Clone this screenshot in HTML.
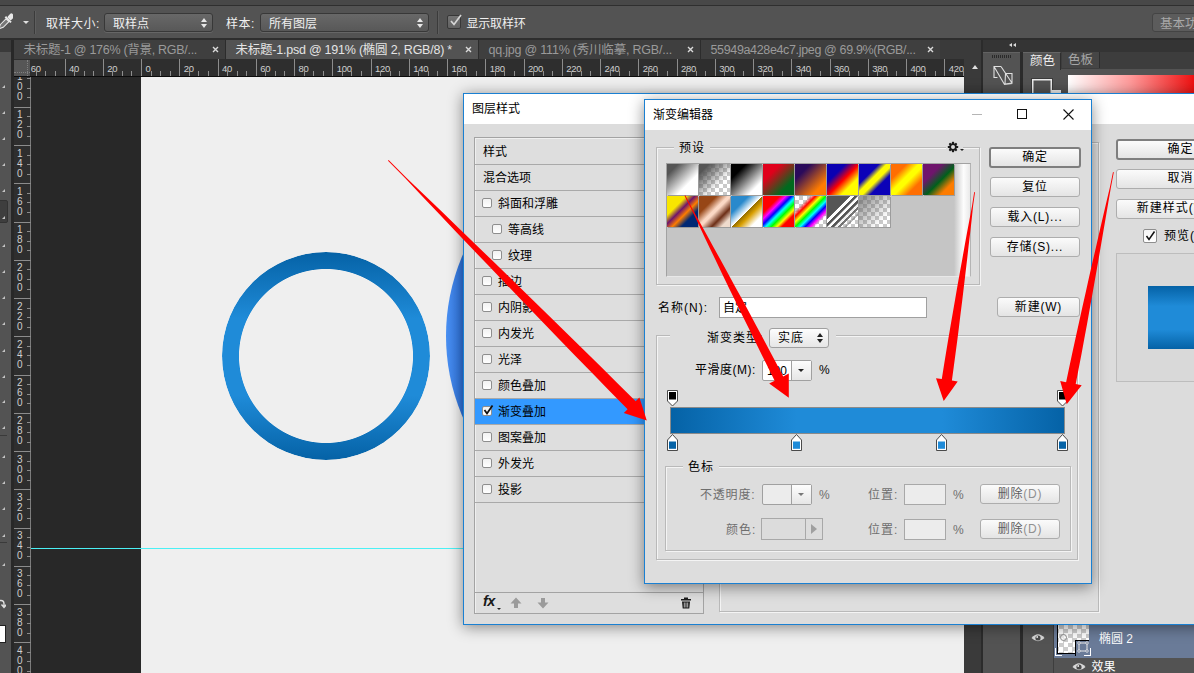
<!DOCTYPE html>
<html lang="zh-CN"><head><meta charset="utf-8"><title>Photoshop - 渐变编辑器</title>
<style>
html,body{margin:0;padding:0}
body{width:1194px;height:673px;overflow:hidden;position:relative;background:#535353;font-family:"Liberation Sans","Noto Sans CJK SC",sans-serif;font-size:12px;color:#000}
div,span,svg{position:absolute;box-sizing:border-box}
.t{white-space:nowrap;line-height:1}
.w{color:#f0f0f0}
.rt{color:#cfcfcf;font-size:9.5px;letter-spacing:-0.3px}
.btn{border:1px solid #adadad;border-radius:3px;background:linear-gradient(#fbfbfb,#e4e4e4);text-align:center;font-size:13px;white-space:nowrap}
.cb{width:10px;height:10px;border:1px solid #8e8e8e;border-radius:2px;background:linear-gradient(#f2f2f2,#fff)}
.row{left:0;width:228px;height:26px;border-bottom:1px solid #a9a9a9}
.row .t{font-size:13px;top:6px}
.grp{border:1px solid #b9b9b9;box-shadow:inset 1px 1px 0 #f4f4f4, 1px 1px 0 #f4f4f4}
.sw{width:31px;height:31px;top:0;box-shadow:1px 1px 0 #9c9c9c}
.dis{color:#6e6e6e}
.inp{border:1px solid #a8a8a8;background:#ececec}
</style></head><body>
<div style="left:0;top:0;width:1194px;height:5px;background:#484848"></div><div style="left:0;top:5px;width:1194px;height:1px;background:#2f2f2f"></div><div style="left:0;top:6px;width:1194px;height:33px;background:#535353"></div><div style="left:0;top:38px;width:1194px;height:2px;background:#2e2e2e"></div><svg style="left:-3.5px;top:12px" width="16" height="20" viewBox="0 0 16 20"><g transform="rotate(45 8 10)"><rect x="6" y="-1" width="5" height="6" rx="1.5" fill="#e8e8e8"/><rect x="4.5" y="5" width="8" height="2" fill="#e8e8e8"/><path d="M6.5 7 L10.5 7 L10.5 15 L8.5 19 L6.5 15 Z" fill="#777" stroke="#e8e8e8" stroke-width="1"/></g></svg><div style="left:22.5px;top:20.5px;width:0;height:0;border-left:3px solid transparent;border-right:3px solid transparent;border-top:3.5px solid #e0e0e0"></div><div style="left:34px;top:11px;width:1px;height:23px;background:#3b3b3b"></div><div style="left:35px;top:11px;width:1px;height:23px;background:#5e5e5e"></div><span class="t w" style="left:46px;top:17.5px;font-size:12px;letter-spacing:0.5px">取样大小:</span><div style="left:104px;top:13px;width:109px;height:19px;border:1px solid #383838;border-radius:3px;background:linear-gradient(#686868,#585858);box-shadow:0 1px 0 #666"><span class="t w" style="left:8px;top:3.5px;font-size:12px">取样点</span><div style="right:5px;top:4px;width:0;height:0;border-left:3px solid transparent;border-right:3px solid transparent;border-bottom:4px solid #e8e8e8"></div><div style="right:5px;top:10px;width:0;height:0;border-left:3px solid transparent;border-right:3px solid transparent;border-top:4px solid #e8e8e8"></div></div><span class="t w" style="left:226px;top:17.5px;font-size:12px;letter-spacing:0.5px">样本:</span><div style="left:260px;top:13px;width:169px;height:19px;border:1px solid #383838;border-radius:3px;background:linear-gradient(#686868,#585858);box-shadow:0 1px 0 #666"><span class="t w" style="left:8px;top:3.5px;font-size:12px">所有图层</span><div style="right:5px;top:4px;width:0;height:0;border-left:3px solid transparent;border-right:3px solid transparent;border-bottom:4px solid #e8e8e8"></div><div style="right:5px;top:10px;width:0;height:0;border-left:3px solid transparent;border-right:3px solid transparent;border-top:4px solid #e8e8e8"></div></div><div style="left:437px;top:11px;width:1px;height:23px;background:#3b3b3b"></div><div style="left:438px;top:11px;width:1px;height:23px;background:#5e5e5e"></div><div style="left:447px;top:15px;width:14px;height:14px;border:1px solid #383838;border-radius:2px;background:linear-gradient(#747474,#626262)"><svg style="left:1px;top:-2px" width="14" height="13" viewBox="0 0 14 13"><path d="M2 7 L5 10.5 L12 1" fill="none" stroke="#d6d6d6" stroke-width="1.7"/></svg></div><span class="t w" style="left:466.5px;top:17.5px;font-size:12px;letter-spacing:-0.2px">显示取样环</span><div style="left:1152px;top:13px;width:60px;height:19px;border:1px solid #444;border-radius:3px;background:#5c5c5c"><span class="t" style="left:7px;top:3.5px;font-size:12.5px;color:#a8a8a8">基本功能</span></div><div style="left:0;top:40px;width:11px;height:12px;background:#3a3a3a"></div><div style="left:11px;top:40px;width:3px;height:633px;background:#282828"></div><div style="left:14px;top:40px;width:967px;height:19px;background:#3e3e3e"></div><div style="left:14px;top:40px;width:212px;height:19px;background:#3f3f3f;border-right:1px solid #2c2c2c"><span class="t" style="left:9.5px;top:3.5px;font-size:12.5px;letter-spacing:-0.29px;color:#9a9a9a">未标题-1 @ 176% (背景, RGB/...</span><svg style="left:198px;top:6px" width="7" height="7" viewBox="0 0 7 7"><path d="M1 1 L6 6 M6 1 L1 6" stroke="#dadada" stroke-width="1.4"/></svg></div><div style="left:226px;top:40px;width:253px;height:19px;background:#535353;border-right:1px solid #2c2c2c"><span class="t" style="left:9.5px;top:3.5px;font-size:12.5px;letter-spacing:-0.23px;color:#e4e4e4">未标题-1.psd @ 191% (椭圆 2, RGB/8) *</span><svg style="left:239px;top:6px" width="7" height="7" viewBox="0 0 7 7"><path d="M1 1 L6 6 M6 1 L1 6" stroke="#dadada" stroke-width="1.4"/></svg></div><div style="left:479px;top:40px;width:222px;height:19px;background:#3f3f3f;border-right:1px solid #2c2c2c"><span class="t" style="left:9.5px;top:3.5px;font-size:12.5px;letter-spacing:-0.21px;color:#9a9a9a">qq.jpg @ 111% (秀川临摹, RGB/...</span><svg style="left:208px;top:6px" width="7" height="7" viewBox="0 0 7 7"><path d="M1 1 L6 6 M6 1 L1 6" stroke="#dadada" stroke-width="1.4"/></svg></div><div style="left:701px;top:40px;width:240px;height:19px;background:#3f3f3f;border-right:1px solid #2c2c2c"><span class="t" style="left:9.5px;top:3.5px;font-size:12.5px;letter-spacing:-0.35px;color:#9a9a9a">55949a428e4c7.jpeg @ 69.9%(RGB/...</span><svg style="left:226px;top:6px" width="7" height="7" viewBox="0 0 7 7"><path d="M1 1 L6 6 M6 1 L1 6" stroke="#dadada" stroke-width="1.4"/></svg></div><div style="left:14px;top:59px;width:950px;height:18px;background:#2e2e2e;border-bottom:1px solid #0c0c0c"></div><div style="left:14px;top:77px;width:17px;height:596px;background:#2e2e2e;border-right:1px solid #7c7c7c"></div><div style="left:14px;top:60px;width:16px;height:16px;background:#565656"></div><div style="left:14px;top:72px;width:16px;height:0;border-top:1px dotted #808080"></div><div style="left:27px;top:60px;width:0;height:16px;border-left:1px dotted #808080"></div><span class="t rt" style="left:30.8px;top:64px">60</span><div style="left:35.8px;top:71px;width:1px;height:5px;background:#8e8e8e"></div><div style="left:45.4px;top:71px;width:1px;height:5px;background:#8e8e8e"></div><div style="left:54.9px;top:71px;width:1px;height:5px;background:#8e8e8e"></div><div style="left:64.5px;top:59px;width:1px;height:17px;background:#8c8c8c"></div><span class="t rt" style="left:69.0px;top:64px">40</span><div style="left:74.1px;top:71px;width:1px;height:5px;background:#8e8e8e"></div><div style="left:83.6px;top:71px;width:1px;height:5px;background:#8e8e8e"></div><div style="left:93.2px;top:71px;width:1px;height:5px;background:#8e8e8e"></div><div style="left:102.8px;top:59px;width:1px;height:17px;background:#8c8c8c"></div><span class="t rt" style="left:107.2px;top:64px">20</span><div style="left:112.3px;top:71px;width:1px;height:5px;background:#8e8e8e"></div><div style="left:121.9px;top:71px;width:1px;height:5px;background:#8e8e8e"></div><div style="left:131.4px;top:71px;width:1px;height:5px;background:#8e8e8e"></div><div style="left:141.0px;top:59px;width:1px;height:17px;background:#8c8c8c"></div><span class="t rt" style="left:145.5px;top:64px">0</span><div style="left:150.6px;top:71px;width:1px;height:5px;background:#8e8e8e"></div><div style="left:160.1px;top:71px;width:1px;height:5px;background:#8e8e8e"></div><div style="left:169.7px;top:71px;width:1px;height:5px;background:#8e8e8e"></div><div style="left:179.2px;top:59px;width:1px;height:17px;background:#8c8c8c"></div><span class="t rt" style="left:183.8px;top:64px">20</span><div style="left:188.8px;top:71px;width:1px;height:5px;background:#8e8e8e"></div><div style="left:198.4px;top:71px;width:1px;height:5px;background:#8e8e8e"></div><div style="left:207.9px;top:71px;width:1px;height:5px;background:#8e8e8e"></div><div style="left:217.5px;top:59px;width:1px;height:17px;background:#8c8c8c"></div><span class="t rt" style="left:222.0px;top:64px">40</span><div style="left:227.1px;top:71px;width:1px;height:5px;background:#8e8e8e"></div><div style="left:236.6px;top:71px;width:1px;height:5px;background:#8e8e8e"></div><div style="left:246.2px;top:71px;width:1px;height:5px;background:#8e8e8e"></div><div style="left:255.8px;top:59px;width:1px;height:17px;background:#8c8c8c"></div><span class="t rt" style="left:260.2px;top:64px">60</span><div style="left:265.3px;top:71px;width:1px;height:5px;background:#8e8e8e"></div><div style="left:274.9px;top:71px;width:1px;height:5px;background:#8e8e8e"></div><div style="left:284.4px;top:71px;width:1px;height:5px;background:#8e8e8e"></div><div style="left:294.0px;top:59px;width:1px;height:17px;background:#8c8c8c"></div><span class="t rt" style="left:298.5px;top:64px">80</span><div style="left:303.6px;top:71px;width:1px;height:5px;background:#8e8e8e"></div><div style="left:313.1px;top:71px;width:1px;height:5px;background:#8e8e8e"></div><div style="left:322.7px;top:71px;width:1px;height:5px;background:#8e8e8e"></div><div style="left:332.2px;top:59px;width:1px;height:17px;background:#8c8c8c"></div><span class="t rt" style="left:336.8px;top:64px">100</span><div style="left:341.8px;top:71px;width:1px;height:5px;background:#8e8e8e"></div><div style="left:351.4px;top:71px;width:1px;height:5px;background:#8e8e8e"></div><div style="left:360.9px;top:71px;width:1px;height:5px;background:#8e8e8e"></div><div style="left:370.5px;top:59px;width:1px;height:17px;background:#8c8c8c"></div><span class="t rt" style="left:375.0px;top:64px">120</span><div style="left:380.1px;top:71px;width:1px;height:5px;background:#8e8e8e"></div><div style="left:389.6px;top:71px;width:1px;height:5px;background:#8e8e8e"></div><div style="left:399.2px;top:71px;width:1px;height:5px;background:#8e8e8e"></div><div style="left:408.8px;top:59px;width:1px;height:17px;background:#8c8c8c"></div><span class="t rt" style="left:413.2px;top:64px">140</span><div style="left:418.3px;top:71px;width:1px;height:5px;background:#8e8e8e"></div><div style="left:427.9px;top:71px;width:1px;height:5px;background:#8e8e8e"></div><div style="left:437.4px;top:71px;width:1px;height:5px;background:#8e8e8e"></div><div style="left:447.0px;top:59px;width:1px;height:17px;background:#8c8c8c"></div><span class="t rt" style="left:451.5px;top:64px">160</span><div style="left:456.6px;top:71px;width:1px;height:5px;background:#8e8e8e"></div><div style="left:466.1px;top:71px;width:1px;height:5px;background:#8e8e8e"></div><div style="left:475.7px;top:71px;width:1px;height:5px;background:#8e8e8e"></div><div style="left:485.2px;top:59px;width:1px;height:17px;background:#8c8c8c"></div><span class="t rt" style="left:489.8px;top:64px">180</span><div style="left:494.8px;top:71px;width:1px;height:5px;background:#8e8e8e"></div><div style="left:504.4px;top:71px;width:1px;height:5px;background:#8e8e8e"></div><div style="left:513.9px;top:71px;width:1px;height:5px;background:#8e8e8e"></div><div style="left:523.5px;top:59px;width:1px;height:17px;background:#8c8c8c"></div><span class="t rt" style="left:528.0px;top:64px">200</span><div style="left:533.1px;top:71px;width:1px;height:5px;background:#8e8e8e"></div><div style="left:542.6px;top:71px;width:1px;height:5px;background:#8e8e8e"></div><div style="left:552.2px;top:71px;width:1px;height:5px;background:#8e8e8e"></div><div style="left:561.8px;top:59px;width:1px;height:17px;background:#8c8c8c"></div><span class="t rt" style="left:566.2px;top:64px">220</span><div style="left:571.3px;top:71px;width:1px;height:5px;background:#8e8e8e"></div><div style="left:580.9px;top:71px;width:1px;height:5px;background:#8e8e8e"></div><div style="left:590.4px;top:71px;width:1px;height:5px;background:#8e8e8e"></div><div style="left:600.0px;top:59px;width:1px;height:17px;background:#8c8c8c"></div><span class="t rt" style="left:604.5px;top:64px">240</span><div style="left:609.6px;top:71px;width:1px;height:5px;background:#8e8e8e"></div><div style="left:619.1px;top:71px;width:1px;height:5px;background:#8e8e8e"></div><div style="left:628.7px;top:71px;width:1px;height:5px;background:#8e8e8e"></div><div style="left:638.2px;top:59px;width:1px;height:17px;background:#8c8c8c"></div><span class="t rt" style="left:642.8px;top:64px">260</span><div style="left:647.8px;top:71px;width:1px;height:5px;background:#8e8e8e"></div><div style="left:657.4px;top:71px;width:1px;height:5px;background:#8e8e8e"></div><div style="left:666.9px;top:71px;width:1px;height:5px;background:#8e8e8e"></div><div style="left:676.5px;top:59px;width:1px;height:17px;background:#8c8c8c"></div><span class="t rt" style="left:681.0px;top:64px">280</span><div style="left:686.1px;top:71px;width:1px;height:5px;background:#8e8e8e"></div><div style="left:695.6px;top:71px;width:1px;height:5px;background:#8e8e8e"></div><div style="left:705.2px;top:71px;width:1px;height:5px;background:#8e8e8e"></div><div style="left:714.8px;top:59px;width:1px;height:17px;background:#8c8c8c"></div><span class="t rt" style="left:719.2px;top:64px">300</span><div style="left:724.3px;top:71px;width:1px;height:5px;background:#8e8e8e"></div><div style="left:733.9px;top:71px;width:1px;height:5px;background:#8e8e8e"></div><div style="left:743.4px;top:71px;width:1px;height:5px;background:#8e8e8e"></div><div style="left:753.0px;top:59px;width:1px;height:17px;background:#8c8c8c"></div><span class="t rt" style="left:757.5px;top:64px">320</span><div style="left:762.6px;top:71px;width:1px;height:5px;background:#8e8e8e"></div><div style="left:772.1px;top:71px;width:1px;height:5px;background:#8e8e8e"></div><div style="left:781.7px;top:71px;width:1px;height:5px;background:#8e8e8e"></div><div style="left:791.2px;top:59px;width:1px;height:17px;background:#8c8c8c"></div><span class="t rt" style="left:795.8px;top:64px">340</span><div style="left:800.8px;top:71px;width:1px;height:5px;background:#8e8e8e"></div><div style="left:810.4px;top:71px;width:1px;height:5px;background:#8e8e8e"></div><div style="left:819.9px;top:71px;width:1px;height:5px;background:#8e8e8e"></div><div style="left:829.5px;top:59px;width:1px;height:17px;background:#8c8c8c"></div><span class="t rt" style="left:834.0px;top:64px">360</span><div style="left:839.1px;top:71px;width:1px;height:5px;background:#8e8e8e"></div><div style="left:848.6px;top:71px;width:1px;height:5px;background:#8e8e8e"></div><div style="left:858.2px;top:71px;width:1px;height:5px;background:#8e8e8e"></div><div style="left:867.8px;top:59px;width:1px;height:17px;background:#8c8c8c"></div><span class="t rt" style="left:872.2px;top:64px">380</span><div style="left:877.3px;top:71px;width:1px;height:5px;background:#8e8e8e"></div><div style="left:886.9px;top:71px;width:1px;height:5px;background:#8e8e8e"></div><div style="left:896.4px;top:71px;width:1px;height:5px;background:#8e8e8e"></div><div style="left:906.0px;top:59px;width:1px;height:17px;background:#8c8c8c"></div><span class="t rt" style="left:910.5px;top:64px">400</span><div style="left:915.6px;top:71px;width:1px;height:5px;background:#8e8e8e"></div><div style="left:925.1px;top:71px;width:1px;height:5px;background:#8e8e8e"></div><div style="left:934.7px;top:71px;width:1px;height:5px;background:#8e8e8e"></div><div style="left:944.2px;top:59px;width:1px;height:17px;background:#8c8c8c"></div><span class="t rt" style="left:948.8px;top:64px">420</span><div style="left:953.8px;top:71px;width:1px;height:5px;background:#8e8e8e"></div><div style="left:963.4px;top:71px;width:1px;height:5px;background:#8e8e8e"></div><div style="left:0;top:77px;width:40px;height:596px;overflow:hidden"><div style="left:0;top:-77px;width:40px;height:673px"><span class="t rt" style="left:17px;top:72.0px;font-size:10px">1</span><span class="t rt" style="left:17px;top:82.0px;font-size:10px">0</span><span class="t rt" style="left:17px;top:92.0px;font-size:10px">0</span><div style="left:27px;top:78.1px;width:4px;height:1px;background:#8a8a8a"></div><div style="left:27px;top:87.7px;width:4px;height:1px;background:#8a8a8a"></div><div style="left:27px;top:97.2px;width:4px;height:1px;background:#8a8a8a"></div><div style="left:14px;top:106.8px;width:17px;height:1px;background:#8c8c8c"></div><span class="t rt" style="left:17px;top:110.3px;font-size:10px">1</span><span class="t rt" style="left:17px;top:120.3px;font-size:10px">2</span><span class="t rt" style="left:17px;top:130.3px;font-size:10px">0</span><div style="left:27px;top:116.4px;width:4px;height:1px;background:#8a8a8a"></div><div style="left:27px;top:125.9px;width:4px;height:1px;background:#8a8a8a"></div><div style="left:27px;top:135.5px;width:4px;height:1px;background:#8a8a8a"></div><div style="left:14px;top:145.1px;width:17px;height:1px;background:#8c8c8c"></div><span class="t rt" style="left:17px;top:148.6px;font-size:10px">1</span><span class="t rt" style="left:17px;top:158.6px;font-size:10px">4</span><span class="t rt" style="left:17px;top:168.6px;font-size:10px">0</span><div style="left:27px;top:154.6px;width:4px;height:1px;background:#8a8a8a"></div><div style="left:27px;top:164.2px;width:4px;height:1px;background:#8a8a8a"></div><div style="left:27px;top:173.7px;width:4px;height:1px;background:#8a8a8a"></div><div style="left:14px;top:183.3px;width:17px;height:1px;background:#8c8c8c"></div><span class="t rt" style="left:17px;top:186.8px;font-size:10px">1</span><span class="t rt" style="left:17px;top:196.8px;font-size:10px">6</span><span class="t rt" style="left:17px;top:206.8px;font-size:10px">0</span><div style="left:27px;top:192.9px;width:4px;height:1px;background:#8a8a8a"></div><div style="left:27px;top:202.4px;width:4px;height:1px;background:#8a8a8a"></div><div style="left:27px;top:212.0px;width:4px;height:1px;background:#8a8a8a"></div><div style="left:14px;top:221.6px;width:17px;height:1px;background:#8c8c8c"></div><span class="t rt" style="left:17px;top:225.1px;font-size:10px">1</span><span class="t rt" style="left:17px;top:235.1px;font-size:10px">8</span><span class="t rt" style="left:17px;top:245.1px;font-size:10px">0</span><div style="left:27px;top:231.1px;width:4px;height:1px;background:#8a8a8a"></div><div style="left:27px;top:240.7px;width:4px;height:1px;background:#8a8a8a"></div><div style="left:27px;top:250.2px;width:4px;height:1px;background:#8a8a8a"></div><div style="left:14px;top:259.8px;width:17px;height:1px;background:#8c8c8c"></div><span class="t rt" style="left:17px;top:263.3px;font-size:10px">2</span><span class="t rt" style="left:17px;top:273.3px;font-size:10px">0</span><span class="t rt" style="left:17px;top:283.3px;font-size:10px">0</span><div style="left:27px;top:269.4px;width:4px;height:1px;background:#8a8a8a"></div><div style="left:27px;top:278.9px;width:4px;height:1px;background:#8a8a8a"></div><div style="left:27px;top:288.5px;width:4px;height:1px;background:#8a8a8a"></div><div style="left:14px;top:298.1px;width:17px;height:1px;background:#8c8c8c"></div><span class="t rt" style="left:17px;top:301.6px;font-size:10px">2</span><span class="t rt" style="left:17px;top:311.6px;font-size:10px">2</span><span class="t rt" style="left:17px;top:321.6px;font-size:10px">0</span><div style="left:27px;top:307.6px;width:4px;height:1px;background:#8a8a8a"></div><div style="left:27px;top:317.2px;width:4px;height:1px;background:#8a8a8a"></div><div style="left:27px;top:326.7px;width:4px;height:1px;background:#8a8a8a"></div><div style="left:14px;top:336.3px;width:17px;height:1px;background:#8c8c8c"></div><span class="t rt" style="left:17px;top:339.8px;font-size:10px">2</span><span class="t rt" style="left:17px;top:349.8px;font-size:10px">4</span><span class="t rt" style="left:17px;top:359.8px;font-size:10px">0</span><div style="left:27px;top:345.9px;width:4px;height:1px;background:#8a8a8a"></div><div style="left:27px;top:355.4px;width:4px;height:1px;background:#8a8a8a"></div><div style="left:27px;top:365.0px;width:4px;height:1px;background:#8a8a8a"></div><div style="left:14px;top:374.6px;width:17px;height:1px;background:#8c8c8c"></div><span class="t rt" style="left:17px;top:378.1px;font-size:10px">2</span><span class="t rt" style="left:17px;top:388.1px;font-size:10px">6</span><span class="t rt" style="left:17px;top:398.1px;font-size:10px">0</span><div style="left:27px;top:384.1px;width:4px;height:1px;background:#8a8a8a"></div><div style="left:27px;top:393.7px;width:4px;height:1px;background:#8a8a8a"></div><div style="left:27px;top:403.2px;width:4px;height:1px;background:#8a8a8a"></div><div style="left:14px;top:412.8px;width:17px;height:1px;background:#8c8c8c"></div><span class="t rt" style="left:17px;top:416.3px;font-size:10px">2</span><span class="t rt" style="left:17px;top:426.3px;font-size:10px">8</span><span class="t rt" style="left:17px;top:436.3px;font-size:10px">0</span><div style="left:27px;top:422.4px;width:4px;height:1px;background:#8a8a8a"></div><div style="left:27px;top:431.9px;width:4px;height:1px;background:#8a8a8a"></div><div style="left:27px;top:441.5px;width:4px;height:1px;background:#8a8a8a"></div><div style="left:14px;top:451.1px;width:17px;height:1px;background:#8c8c8c"></div><span class="t rt" style="left:17px;top:454.6px;font-size:10px">3</span><span class="t rt" style="left:17px;top:464.6px;font-size:10px">0</span><span class="t rt" style="left:17px;top:474.6px;font-size:10px">0</span><div style="left:27px;top:460.6px;width:4px;height:1px;background:#8a8a8a"></div><div style="left:27px;top:470.2px;width:4px;height:1px;background:#8a8a8a"></div><div style="left:27px;top:479.7px;width:4px;height:1px;background:#8a8a8a"></div><div style="left:14px;top:489.3px;width:17px;height:1px;background:#8c8c8c"></div><span class="t rt" style="left:17px;top:492.8px;font-size:10px">3</span><span class="t rt" style="left:17px;top:502.8px;font-size:10px">2</span><span class="t rt" style="left:17px;top:512.8px;font-size:10px">0</span><div style="left:27px;top:498.9px;width:4px;height:1px;background:#8a8a8a"></div><div style="left:27px;top:508.4px;width:4px;height:1px;background:#8a8a8a"></div><div style="left:27px;top:518.0px;width:4px;height:1px;background:#8a8a8a"></div><div style="left:14px;top:527.5px;width:17px;height:1px;background:#8c8c8c"></div><span class="t rt" style="left:17px;top:531.0px;font-size:10px">3</span><span class="t rt" style="left:17px;top:541.0px;font-size:10px">4</span><span class="t rt" style="left:17px;top:551.0px;font-size:10px">0</span><div style="left:27px;top:537.1px;width:4px;height:1px;background:#8a8a8a"></div><div style="left:27px;top:546.7px;width:4px;height:1px;background:#8a8a8a"></div><div style="left:27px;top:556.2px;width:4px;height:1px;background:#8a8a8a"></div><div style="left:14px;top:565.8px;width:17px;height:1px;background:#8c8c8c"></div><span class="t rt" style="left:17px;top:569.3px;font-size:10px">3</span><span class="t rt" style="left:17px;top:579.3px;font-size:10px">6</span><span class="t rt" style="left:17px;top:589.3px;font-size:10px">0</span><div style="left:27px;top:575.4px;width:4px;height:1px;background:#8a8a8a"></div><div style="left:27px;top:584.9px;width:4px;height:1px;background:#8a8a8a"></div><div style="left:27px;top:594.5px;width:4px;height:1px;background:#8a8a8a"></div><div style="left:14px;top:604.0px;width:17px;height:1px;background:#8c8c8c"></div><span class="t rt" style="left:17px;top:607.5px;font-size:10px">3</span><span class="t rt" style="left:17px;top:617.5px;font-size:10px">8</span><span class="t rt" style="left:17px;top:627.5px;font-size:10px">0</span><div style="left:27px;top:613.6px;width:4px;height:1px;background:#8a8a8a"></div><div style="left:27px;top:623.2px;width:4px;height:1px;background:#8a8a8a"></div><div style="left:27px;top:632.7px;width:4px;height:1px;background:#8a8a8a"></div><div style="left:14px;top:642.3px;width:17px;height:1px;background:#8c8c8c"></div><span class="t rt" style="left:17px;top:645.8px;font-size:10px">4</span><span class="t rt" style="left:17px;top:655.8px;font-size:10px">0</span><span class="t rt" style="left:17px;top:665.8px;font-size:10px">0</span><div style="left:27px;top:651.9px;width:4px;height:1px;background:#8a8a8a"></div><div style="left:27px;top:661.4px;width:4px;height:1px;background:#8a8a8a"></div><div style="left:27px;top:671.0px;width:4px;height:1px;background:#8a8a8a"></div></div></div><div style="left:972px;top:65px;width:0;height:0;border-left:3.5px solid transparent;border-right:3.5px solid transparent;border-bottom:4px solid #e0e0e0;z-index:3"></div><div style="left:31px;top:77px;width:110px;height:596px;background:#282828"></div><div style="left:141px;top:77px;width:823px;height:596px;background:#efefef"></div><div style="left:222px;top:252px;width:208px;height:208px;border-radius:50%;filter:blur(0.6px);background:linear-gradient(#0562a6,#1f8bd8 32%,#1f8bd8 69%,#0562a6);-webkit-mask:radial-gradient(circle closest-side,transparent 86.6px,#000 87.4px);mask:radial-gradient(circle closest-side,transparent 86.6px,#000 87.4px)"></div><div style="left:445.5px;top:130.5px;width:410px;height:410px;border-radius:50%;filter:blur(0.6px);background:linear-gradient(90deg,#4a90f2,#2e72dc 18px,#2a6cd6 30px)"></div><div style="left:31px;top:548px;width:440px;height:1px;background:#4bf0f5"></div><div style="left:0;top:52px;width:11px;height:621px;background:#535353"></div><div style="left:2px;top:85px;width:0;height:0;border-left:3px solid transparent;border-bottom:3px solid #c4c4c4"></div><div style="left:2px;top:111px;width:0;height:0;border-left:3px solid transparent;border-bottom:3px solid #c4c4c4"></div><div style="left:2px;top:137px;width:0;height:0;border-left:3px solid transparent;border-bottom:3px solid #c4c4c4"></div><div style="left:2px;top:163px;width:0;height:0;border-left:3px solid transparent;border-bottom:3px solid #c4c4c4"></div><div style="left:2px;top:189px;width:0;height:0;border-left:3px solid transparent;border-bottom:3px solid #c4c4c4"></div><div style="left:2px;top:215px;width:0;height:0;border-left:3px solid transparent;border-bottom:3px solid #c4c4c4"></div><div style="left:2px;top:244px;width:0;height:0;border-left:3px solid transparent;border-bottom:3px solid #c4c4c4"></div><div style="left:2px;top:270px;width:0;height:0;border-left:3px solid transparent;border-bottom:3px solid #c4c4c4"></div><div style="left:2px;top:296px;width:0;height:0;border-left:3px solid transparent;border-bottom:3px solid #c4c4c4"></div><div style="left:2px;top:322px;width:0;height:0;border-left:3px solid transparent;border-bottom:3px solid #c4c4c4"></div><div style="left:2px;top:349px;width:0;height:0;border-left:3px solid transparent;border-bottom:3px solid #c4c4c4"></div><div style="left:2px;top:375px;width:0;height:0;border-left:3px solid transparent;border-bottom:3px solid #c4c4c4"></div><div style="left:2px;top:400px;width:0;height:0;border-left:3px solid transparent;border-bottom:3px solid #c4c4c4"></div><div style="left:2px;top:426px;width:0;height:0;border-left:3px solid transparent;border-bottom:3px solid #c4c4c4"></div><div style="left:2px;top:455px;width:0;height:0;border-left:3px solid transparent;border-bottom:3px solid #c4c4c4"></div><div style="left:2px;top:481px;width:0;height:0;border-left:3px solid transparent;border-bottom:3px solid #c4c4c4"></div><div style="left:2px;top:507px;width:0;height:0;border-left:3px solid transparent;border-bottom:3px solid #c4c4c4"></div><div style="left:2px;top:534px;width:0;height:0;border-left:3px solid transparent;border-bottom:3px solid #c4c4c4"></div><div style="left:2px;top:563px;width:0;height:0;border-left:3px solid transparent;border-bottom:3px solid #c4c4c4"></div><div style="left:-4px;top:200px;width:12px;height:23px;border:1px solid #333;border-radius:2px;background:#3e3e3e"></div><div style="left:2px;top:216px;width:0;height:0;border-left:3px solid transparent;border-bottom:3px solid #c4c4c4"></div><div style="left:0;top:435px;width:7px;height:1px;background:#3a3a3a"></div><div style="left:0;top:542px;width:7px;height:1px;background:#3a3a3a"></div><svg style="left:-4px;top:597px" width="10" height="12" viewBox="0 0 10 12"><path d="M1 3.5 H5 Q8 3.5 8 7 V10 M5.5 7.5 L8 10.5 L10.5 7.5" fill="none" stroke="#e0e0e0" stroke-width="1.4"/></svg><div style="left:0;top:625px;width:6px;height:18px;background:#fff;border:1px solid #222;border-left:0"></div><div style="left:964px;top:40px;width:17px;height:633px;background:#3a3a3a"></div><div style="left:940px;top:40px;width:41px;height:19px;background:#3a3a3a"></div><div style="left:981px;top:40px;width:2px;height:633px;background:#2b2b2b"></div><div style="left:983px;top:40px;width:211px;height:12px;background:#343434"></div><div style="left:1009px;top:43px;width:0;height:0;border-top:2.5px solid transparent;border-bottom:2.5px solid transparent;border-right:3.5px solid #dcdcdc"></div><div style="left:1013px;top:43px;width:0;height:0;border-top:2.5px solid transparent;border-bottom:2.5px solid transparent;border-right:3.5px solid #dcdcdc"></div><div style="left:983px;top:52px;width:37px;height:621px;background:#535353;border-top:1px solid #626262"></div><div style="left:1020px;top:52px;width:3px;height:621px;background:#2b2b2b"></div><div style="left:992px;top:55px;width:19px;height:3px;background:repeating-linear-gradient(90deg,#2a2a2a 0 1px,transparent 1px 2px)"></div><svg style="left:992px;top:64px" width="22" height="24" viewBox="0 0 22 24"><path d="M9 2.5 L2 2.5 L2 13.5 L5.5 13.5 M13.5 9.5 L20 9.5 L20 19 L13 20 L13.5 9.5 M2 2.5 L12.5 20.5 L20.5 19.5 M9 2.5 L20 19" fill="none" stroke="#e0e0e0" stroke-width="1.1"/></svg><div style="left:1023px;top:52px;width:171px;height:17px;background:#3d3d3d"></div><div style="left:1023px;top:69px;width:171px;height:604px;background:#535353"></div><div style="left:1023px;top:52px;width:38px;height:18px;background:#535353;border-top:1px solid #666;border-right:1px solid #2e2e2e"><span class="t" style="left:7px;top:2px;font-size:12.5px;color:#ececec">颜色</span></div><div style="left:1062px;top:52px;width:38px;height:16px;background:#464646;border-right:1px solid #2e2e2e"><span class="t" style="left:6px;top:2px;font-size:12.5px;color:#a6a6a6">色板</span></div><div style="left:1031px;top:78px;width:22px;height:20px;border:1px solid #3c3c3c;background:#535353;box-shadow:inset 0 0 0 1.5px #ececec"></div><div style="left:1052px;top:90px;width:9px;height:9px;background:#f0f0f0"></div><div style="left:1068px;top:75px;width:126px;height:30px;background:linear-gradient(90deg,#fff,#f99 50%,#ee1111 100%)"></div><div style="left:1054px;top:625px;width:140px;height:33px;background:#6a7b98"></div><div style="left:1053px;top:625px;width:1px;height:48px;background:#3e3e3e"></div><div style="left:1057px;top:618px;width:32px;height:36px;border-left:1.5px solid #000;border-bottom:1.5px solid #000;background:#fff repeating-conic-gradient(#cdcdcd 0 25%,#fff 0 50%) 1px 2px/9px 9px"></div><div style="left:1075px;top:639.5px;width:14px;height:16px;background:#6a7b98;border-left:1.5px solid #000;border-top:1.5px solid #000"></div><svg style="left:1077px;top:641px" width="12" height="12" viewBox="0 0 12 12"><rect x="2" y="2" width="8" height="8" fill="none" stroke="#e6e6e6" stroke-width="1"/><g fill="#6a7b98" stroke="#e6e6e6" stroke-width="0.8"><circle cx="2" cy="2" r="1.3"/><circle cx="10" cy="2" r="1.3"/><circle cx="2" cy="10" r="1.3"/><circle cx="10" cy="10" r="1.3"/></g></svg><div style="left:1060px;top:634px;width:7px;height:7px;border:1px solid #8c8c8c;border-radius:50%;background:rgba(255,255,255,.6)"></div><div style="left:1055px;top:648px;width:7px;height:8px;border-left:1px solid #fff;border-bottom:1px solid #fff"></div><div style="left:1084px;top:648px;width:7px;height:8px;border-right:1px solid #fff;border-bottom:1px solid #fff"></div><span class="t" style="left:1099px;top:633px;font-size:12px;color:#fff">椭圆 2</span><span class="t" style="left:1091.5px;top:661px;font-size:12px;color:#fff">效果</span><svg style="left:1031px;top:633px" width="14" height="10" viewBox="0 0 14 10"><path d="M0.5 5 Q7 -2.5 13.5 5 Q7 11.5 0.5 5 Z" fill="#d8d8d8"/><circle cx="7" cy="5" r="2.6" fill="#4a4a4a"/><circle cx="6.2" cy="4" r="0.9" fill="#eee"/></svg><svg style="left:1072px;top:662px" width="14" height="10" viewBox="0 0 14 10"><path d="M0.5 5 Q7 -2.5 13.5 5 Q7 11.5 0.5 5 Z" fill="#d8d8d8"/><circle cx="7" cy="5" r="2.6" fill="#4a4a4a"/><circle cx="6.2" cy="4" r="0.9" fill="#eee"/></svg><div style="left:463px;top:93px;width:800px;height:532px;background:#dcdcdc;border:1px solid #1a80d2;box-shadow:0 2px 14px rgba(0,0,0,.45)"><div style="left:0;top:0;width:798px;height:30px;background:#fff"></div><span class="t" style="left:8px;top:9px;font-size:12px">图层样式</span><div style="left:10px;top:43px;width:230px;height:477px;border:1px solid #a3a3a3;background:#dedede;box-shadow:inset 1px 1px 0 #efefef"><div class="row" style="top:1px;"><span class="t" style="left:8px;top:7px;font-size:12px">样式</span></div><div class="row" style="top:27px;"><span class="t" style="left:8px;top:7px;font-size:12px">混合选项</span></div><div class="row" style="top:53px;"><div class="cb" style="left:7px;top:7px"></div><span class="t" style="left:23px;top:7px;font-size:12px">斜面和浮雕</span></div><div class="row" style="top:79px;"><div class="cb" style="left:17px;top:7px"></div><span class="t" style="left:33px;top:7px;font-size:12px">等高线</span></div><div class="row" style="top:105px;"><div class="cb" style="left:17px;top:7px"></div><span class="t" style="left:33px;top:7px;font-size:12px">纹理</span></div><div class="row" style="top:131px;"><div class="cb" style="left:7px;top:7px"></div><span class="t" style="left:23px;top:7px;font-size:12px">描边</span></div><div class="row" style="top:157px;"><div class="cb" style="left:7px;top:7px"></div><span class="t" style="left:23px;top:7px;font-size:12px">内阴影</span></div><div class="row" style="top:183px;"><div class="cb" style="left:7px;top:7px"></div><span class="t" style="left:23px;top:7px;font-size:12px">内发光</span></div><div class="row" style="top:209px;"><div class="cb" style="left:7px;top:7px"></div><span class="t" style="left:23px;top:7px;font-size:12px">光泽</span></div><div class="row" style="top:235px;"><div class="cb" style="left:7px;top:7px"></div><span class="t" style="left:23px;top:7px;font-size:12px">颜色叠加</span></div><div class="row" style="top:261px;background:#3399ff;"><div class="cb" style="left:7px;top:7px"></div><svg style="left:7px;top:5px" width="12" height="12" viewBox="0 0 12 12"><path d="M2.5 6 L5 9.5 L10.5 1.5" fill="none" stroke="#111" stroke-width="1.8"/></svg><span class="t" style="left:23px;top:7px;font-size:12px">渐变叠加</span></div><div class="row" style="top:287px;"><div class="cb" style="left:7px;top:7px"></div><span class="t" style="left:23px;top:7px;font-size:12px">图案叠加</span></div><div class="row" style="top:313px;"><div class="cb" style="left:7px;top:7px"></div><span class="t" style="left:23px;top:7px;font-size:12px">外发光</span></div><div class="row" style="top:339px;"><div class="cb" style="left:7px;top:7px"></div><span class="t" style="left:23px;top:7px;font-size:12px">投影</span></div><div style="left:0;top:454px;width:228px;height:1px;background:#a3a3a3"></div><span class="t" style="left:8px;top:456px;font-size:14.5px;font-style:italic;font-weight:bold;letter-spacing:-0.5px;color:#1a1a1a">fx</span><div style="left:22px;top:470px;width:0;height:0;border-left:2px solid transparent;border-right:2px solid transparent;border-top:2px solid #222"></div><svg style="left:35px;top:459px" width="12" height="12" viewBox="0 0 12 12"><path d="M6 0.5 L11.5 6.5 L8 6.5 L8 11 L4 11 L4 6.5 L0.5 6.5 Z" fill="#9b9b9b"/></svg><svg style="left:62px;top:459px" width="12" height="12" viewBox="0 0 12 12"><path d="M6 11.5 L11.5 5.5 L8 5.5 L8 1 L4 1 L4 5.5 L0.5 5.5 Z" fill="#9b9b9b"/></svg><svg style="left:205px;top:459px" width="12" height="12" viewBox="0 0 12 12"><path d="M4 0.5 H8 V2 H11 V3.5 H1 V2 H4 Z M2 4.5 H10 L9.3 11.5 H2.7 Z" fill="#1a1a1a"/><path d="M4.3 5.5 V10.5 M6 5.5 V10.5 M7.7 5.5 V10.5" stroke="#dcdcdc" stroke-width="0.8"/></svg></div><div class="grp" style="left:255px;top:48px;width:380px;height:470px;background:#dedede"></div><div class="btn" style="left:652px;top:45px;width:129px;height:21px;border:2px solid #7e7e7e;line-height:16px;font-size:12px;letter-spacing:1px">确定</div><div class="btn" style="left:652px;top:75px;width:129px;height:20px;line-height:17px;font-size:12px;letter-spacing:1px">取消</div><div class="btn" style="left:652px;top:105px;width:129px;height:20px;line-height:17px;font-size:12px;letter-spacing:1px">新建样式(W)...</div><div style="left:679px;top:135px;width:14px;height:14px;border:1px solid #8e8e8e;border-radius:2px;background:linear-gradient(#f4f4f4,#fff)"><svg style="left:0;top:0" width="12" height="12" viewBox="0 0 12 12"><path d="M2.5 6 L5 9.5 L10.5 1.5" fill="none" stroke="#111" stroke-width="1.5"/></svg></div><span class="t" style="left:700px;top:136px;font-size:12px;letter-spacing:1px">预览(V)</span><div style="left:652px;top:159px;width:129px;height:129px;border:1px solid #bdbdbd;background:#d9d9d9"></div><div style="left:684px;top:192px;width:63px;height:63px;background:linear-gradient(#0562a6,#1f8bd8 32%,#1f8bd8 69%,#0562a6)"></div></div><div style="left:644px;top:99px;width:448px;height:485px;background:#dddddd;border:1px solid #1a80d2;box-shadow:0 3px 14px rgba(0,0,0,.45)"><div style="left:0;top:0;width:446px;height:30px;background:#fff"></div><span class="t" style="left:8px;top:9px;font-size:12px">渐变编辑器</span><div style="left:327px;top:14px;width:10px;height:1px;background:#b5b5b5"></div><div style="left:372px;top:9px;width:10px;height:10px;border:1px solid #111"></div><svg style="left:417.5px;top:9px" width="11" height="11" viewBox="0 0 11 11"><path d="M0.5 0.5 L10.5 10.5 M10.5 0.5 L0.5 10.5" stroke="#111" stroke-width="1.1"/></svg><div class="grp" style="left:11px;top:47px;width:324px;height:138px"></div><span class="t" style="left:29px;top:42px;font-size:12px;background:#dddddd;padding:0 5px;letter-spacing:1px">预设</span><div style="left:301px;top:40px;width:17px;height:14px;background:#dddddd"></div><svg style="left:302px;top:41px" width="12" height="12" viewBox="-6 -6 12 12"><g fill="#1a1a1a"><rect x="-1.1" y="-5.2" width="2.2" height="2.6" rx="0.6" transform="rotate(0)"/><rect x="-1.1" y="-5.2" width="2.2" height="2.6" rx="0.6" transform="rotate(45)"/><rect x="-1.1" y="-5.2" width="2.2" height="2.6" rx="0.6" transform="rotate(90)"/><rect x="-1.1" y="-5.2" width="2.2" height="2.6" rx="0.6" transform="rotate(135)"/><rect x="-1.1" y="-5.2" width="2.2" height="2.6" rx="0.6" transform="rotate(180)"/><rect x="-1.1" y="-5.2" width="2.2" height="2.6" rx="0.6" transform="rotate(225)"/><rect x="-1.1" y="-5.2" width="2.2" height="2.6" rx="0.6" transform="rotate(270)"/><rect x="-1.1" y="-5.2" width="2.2" height="2.6" rx="0.6" transform="rotate(315)"/></g><circle r="2.9" fill="none" stroke="#1a1a1a" stroke-width="1.8"/></svg><div style="left:315px;top:49px;width:0;height:0;border-left:2px solid transparent;border-right:2px solid transparent;border-top:2px solid #222"></div><div style="left:21px;top:63px;width:305px;height:114px;background:#c5c5c5;border:1px solid #a2a2a2;border-right-color:#b4b4b4;border-bottom-color:#e8e8e8"><div style="left:287px;top:0;width:16px;height:112px;background:linear-gradient(90deg,#c5c5c5,#fdfdfd 60%,#e9e9e9)"></div><div class="sw" style="left:0px;top:0;background:linear-gradient(135deg,#555 18%,#fff 66%)"></div><div class="sw" style="left:32px;top:0;background:linear-gradient(135deg,#555 16%,rgba(85,85,85,0) 66%),repeating-conic-gradient(#c9c9c9 0 25%,#fff 0 50%) 0 0/8px 8px"></div><div class="sw" style="left:64px;top:0;background:linear-gradient(135deg,#000 24%,#fff 78%)"></div><div class="sw" style="left:96px;top:0;background:linear-gradient(135deg,#e0001b 28%,#006a1e 75%)"></div><div class="sw" style="left:128px;top:0;background:linear-gradient(135deg,#2a0a5b 25%,#ff7c00 78%)"></div><div class="sw" style="left:160px;top:0;background:linear-gradient(135deg,#0a00b2 30%,#ff0000 52%,#fffc00 73%)"></div><div class="sw" style="left:192px;top:0;background:linear-gradient(135deg,#0b01b8 32%,#fdfa03 45%,#fdfa03 55%,#0b01b8 68%)"></div><div class="sw" style="left:224px;top:0;background:linear-gradient(135deg,#ff6e02 25%,#ffff00 45%,#ffff00 55%,#ff6e02 76%)"></div><div class="sw" style="left:256px;top:0;background:linear-gradient(135deg,#6f156c 30%,#00601b 55%,#fd7c00 78%)"></div><div class="sw" style="left:0px;top:32px;background:linear-gradient(135deg,#f8e600 31%,#6f156c 45%,#fd7c00 58%,#002874 73%)"></div><div class="sw" style="left:32px;top:32px;background:linear-gradient(135deg,#974616 28%,#fbd8c5 47%,#fbd8c5 52%,#6c2e16 70%,#efdbcd 86%)"></div><div class="sw" style="left:64px;top:32px;background:linear-gradient(135deg,#2989cc 28%,#ffffff 50%,#906a00 50.5%,#d99f00 62%,#ffffff 82%)"></div><div class="sw" style="left:96px;top:32px;background:linear-gradient(135deg,#ff0000 27%,#ff00ff 37%,#0000ff 46%,#00ffff 54%,#00ff00 63%,#ffff00 72%,#ff0000 80%)"></div><div class="sw" style="left:128px;top:32px;background:linear-gradient(135deg,rgba(255,0,0,0) 24%,#ff0000 33%,#ffff00 42%,#00ff00 50%,#00ffff 58%,#0000ff 66%,#ff00ff 74%,rgba(255,0,255,0) 82%),repeating-conic-gradient(#c9c9c9 0 25%,#fff 0 50%) 0 0/8px 8px"></div><div class="sw" style="left:160px;top:32px;background:linear-gradient(135deg,#555 37%,#fff 38.5% 44%,#555 45% 49.5%,#fff 50.5% 55.5%,#555 56.5% 61%,rgba(255,255,255,.7) 62% 66.5%,rgba(85,85,85,.8) 67.5% 71%,transparent 72% 77%,rgba(85,85,85,.4) 78% 81%,transparent 82%),repeating-conic-gradient(#c9c9c9 0 25%,#fff 0 50%) 0 0/8px 8px"></div><div class="sw" style="left:192px;top:32px;background:linear-gradient(135deg,rgba(100,100,100,.65) 12%,rgba(100,100,100,0) 78%),repeating-conic-gradient(#c9c9c9 0 25%,#fff 0 50%) 0 0/8px 8px"></div></div><div class="btn" style="left:344px;top:47px;width:92px;height:21px;line-height:16px;font-size:12px;letter-spacing:0.8px;border:2px solid #7e7e7e;">确定</div><div class="btn" style="left:345px;top:77px;width:90px;height:20px;line-height:18px;font-size:12px;letter-spacing:0.8px;">复位</div><div class="btn" style="left:345px;top:107px;width:90px;height:20px;line-height:18px;font-size:12px;letter-spacing:0.8px;">载入(L)...</div><div class="btn" style="left:345px;top:137px;width:90px;height:20px;line-height:18px;font-size:12px;letter-spacing:0.8px;">存储(S)...</div><span class="t" style="left:13px;top:202px;font-size:12px;letter-spacing:1px">名称(N):</span><div style="left:74px;top:197px;width:208px;height:21px;background:#fff;border:1px solid #a0a0a0"><span class="t" style="left:3px;top:4px;font-size:12px">自定</span></div><div class="btn" style="left:352px;top:197px;width:83px;height:20px;line-height:18px;font-size:12px;letter-spacing:0.8px;">新建(W)</div><div class="grp" style="left:11px;top:235px;width:422px;height:225px"></div><div style="left:25px;top:230px;width:166px;height:12px;background:#dddddd"></div><span class="t" style="left:62px;top:232px;font-size:12px;letter-spacing:1px">渐变类型:</span><div style="left:124px;top:228px;width:60px;height:20px;border:1px solid #a0a0a0;border-radius:3px;background:linear-gradient(#fdfdfd,#e6e6e6)"><span class="t" style="left:8px;top:3px;font-size:12px;letter-spacing:1px">实底</span><div style="right:5px;top:4px;width:0;height:0;border-left:3px solid transparent;border-right:3px solid transparent;border-bottom:4px solid #222"></div><div style="right:5px;top:10px;width:0;height:0;border-left:3px solid transparent;border-right:3px solid transparent;border-top:4px solid #222"></div></div><span class="t" style="left:50px;top:264px;font-size:12px;letter-spacing:0.5px">平滑度(M):</span><div style="left:117px;top:260px;width:50px;height:21px;border:1px solid #a0a0a0;border-radius:2px;background:#fff"><span class="t" style="left:4px;top:4px;font-size:12px">100</span><div style="left:28px;top:0;width:20px;height:19px;border-left:1px solid #a0a0a0;background:linear-gradient(#fdfdfd,#e6e6e6)"></div><div style="left:35px;top:8px;width:0;height:0;border-left:3px solid transparent;border-right:3px solid transparent;border-top:3px solid #222"></div></div><span class="t" style="left:174px;top:264px;font-size:12px">%</span><div style="left:25px;top:307px;width:395px;height:27px;border:1px solid #8a8a8a;background:linear-gradient(90deg,#0562a6,#1f8bd8 32%,#1f8bd8 69%,#0562a6)"></div><svg style="left:20.5px;top:290px" width="13" height="18" viewBox="0 0 13 18"><path d="M1.5 0.5 H11.5 V11 L6.5 16 L1.5 11 Z" fill="#fff" stroke="#4a4a4a" stroke-width="1"/><rect x="3" y="2" width="7" height="7.5" fill="#000"/></svg><svg style="left:410.5px;top:290px" width="13" height="18" viewBox="0 0 13 18"><path d="M1.5 0.5 H11.5 V11 L6.5 16 L1.5 11 Z" fill="#fff" stroke="#4a4a4a" stroke-width="1"/><rect x="3" y="2" width="7" height="7.5" fill="#000"/></svg><svg style="left:20.5px;top:333px" width="13" height="19" viewBox="0 0 13 19"><path d="M1.5 17.5 H11.5 V7 L6.5 1.5 L1.5 7 Z" fill="#fff" stroke="#4a4a4a" stroke-width="1" stroke-linejoin="miter"/><rect x="3" y="8.5" width="7" height="7.3" fill="#0562a6"/></svg><svg style="left:144.5px;top:333px" width="13" height="19" viewBox="0 0 13 19"><path d="M1.5 17.5 H11.5 V7 L6.5 1.5 L1.5 7 Z" fill="#fff" stroke="#4a4a4a" stroke-width="1" stroke-linejoin="miter"/><rect x="3" y="8.5" width="7" height="7.3" fill="#1f8bd8"/></svg><svg style="left:289.5px;top:333px" width="13" height="19" viewBox="0 0 13 19"><path d="M1.5 17.5 H11.5 V7 L6.5 1.5 L1.5 7 Z" fill="#fff" stroke="#4a4a4a" stroke-width="1" stroke-linejoin="miter"/><rect x="3" y="8.5" width="7" height="7.3" fill="#1f8bd8"/></svg><svg style="left:410.5px;top:333px" width="13" height="19" viewBox="0 0 13 19"><path d="M1.5 17.5 H11.5 V7 L6.5 1.5 L1.5 7 Z" fill="#fff" stroke="#4a4a4a" stroke-width="1" stroke-linejoin="miter"/><rect x="3" y="8.5" width="7" height="7.3" fill="#0562a6"/></svg><div class="grp" style="left:20px;top:366px;width:406px;height:85px"></div><span class="t" style="left:38px;top:361px;font-size:12px;background:#dddddd;padding:0 5px;letter-spacing:1px">色标</span><span class="t dis" style="left:55px;top:389px;font-size:12px;letter-spacing:0.8px">不透明度:</span><div style="left:117px;top:384px;width:50px;height:21px;border:1px solid #a0a0a0;border-radius:2px;background:#ececec"><span class="t" style="left:4px;top:4px;font-size:12px"></span><div style="left:28px;top:0;width:20px;height:19px;border-left:1px solid #a0a0a0;background:linear-gradient(#fdfdfd,#e6e6e6)"></div><div style="left:35px;top:8px;width:0;height:0;border-left:3px solid transparent;border-right:3px solid transparent;border-top:3px solid #777"></div></div><span class="t dis" style="left:174px;top:389px;font-size:12px">%</span><span class="t dis" style="left:223px;top:389px;font-size:12px;letter-spacing:1px">位置:</span><div class="inp" style="left:259px;top:384px;width:42px;height:21px"></div><span class="t dis" style="left:308px;top:389px;font-size:12px">%</span><div class="btn" style="left:335px;top:384px;width:80px;height:20px;line-height:19px;font-size:12px;letter-spacing:0.8px;color:#5e5e5e;">删除<span style="position:static;color:#909090">(D)</span></div><span class="t dis" style="left:223px;top:424px;font-size:12px;letter-spacing:1px">位置:</span><div class="inp" style="left:259px;top:419px;width:42px;height:21px"></div><span class="t dis" style="left:308px;top:424px;font-size:12px">%</span><div class="btn" style="left:335px;top:419px;width:80px;height:20px;line-height:19px;font-size:12px;letter-spacing:0.8px;color:#5e5e5e;">删除<span style="position:static;color:#909090">(D)</span></div><span class="t dis" style="left:81px;top:424px;font-size:12px;letter-spacing:1px">颜色:</span><div class="inp" style="left:116px;top:418px;width:62px;height:22px;background:#dcdcdc"><div style="left:43px;top:0;width:1px;height:20px;background:#a8a8a8"></div><div style="left:49px;top:5px;width:0;height:0;border-top:5px solid transparent;border-bottom:5px solid transparent;border-left:6px solid #a0a0a0"></div></div></div><svg style="left:0;top:0;z-index:20" width="1194" height="673" viewBox="0 0 1194 673"><polygon points="388.0,160.7 405.3,178.3 422.2,196.2 439.2,214.1 456.2,232.0 473.2,249.8 490.3,267.6 507.4,285.4 524.5,303.2 541.6,320.9 558.7,338.7 575.9,356.4 593.1,374.0 610.3,391.7 627.6,409.3 623.8,413.0 646.8,420.5 639.4,397.5 635.7,401.2 618.2,383.9 600.7,366.5 583.1,349.2 565.5,331.9 547.9,314.7 530.2,297.4 512.6,280.2 494.9,263.1 477.2,245.9 459.4,228.8 441.7,211.6 423.9,194.5 406.1,177.5 388.6,160.1" fill="#ff0000"/><polygon points="684.5,195.7 691.2,208.8 697.5,222.1 703.8,235.4 710.1,248.7 716.5,261.9 722.8,275.2 729.2,288.4 735.7,301.7 742.1,314.9 748.6,328.1 755.1,341.3 761.6,354.5 768.1,367.6 774.7,380.8 769.2,383.6 788.8,397.7 788.8,373.5 783.2,376.4 776.4,363.4 769.5,350.4 762.6,337.4 755.6,324.5 748.7,311.5 741.7,298.6 734.6,285.7 727.6,272.7 720.5,259.8 713.4,247.0 706.3,234.1 699.2,221.2 692.1,208.3 685.3,195.3" fill="#ff0000"/><polygon points="974.2,192.1 972.1,205.5 969.6,218.9 967.1,232.2 964.7,245.5 962.3,258.9 959.9,272.2 957.5,285.5 955.2,298.9 952.9,312.2 950.6,325.6 948.3,339.0 946.1,352.3 943.9,365.7 941.8,379.1 936.0,378.2 943.7,401.1 957.7,381.4 951.9,380.6 953.7,367.2 955.5,353.7 957.3,340.3 959.0,326.8 960.6,313.4 962.3,299.9 963.9,286.5 965.5,273.0 967.1,259.6 968.6,246.1 970.2,232.6 971.7,219.2 973.1,205.7 975.0,192.3" fill="#ff0000"/><polygon points="1113.0,172.1 1109.9,187.2 1106.4,202.1 1102.9,217.1 1099.4,232.1 1096.0,247.1 1092.5,262.1 1089.1,277.0 1085.8,292.0 1082.4,307.0 1079.1,322.1 1075.8,337.1 1072.5,352.1 1069.3,367.1 1066.1,382.2 1060.2,381.0 1066.7,404.2 1081.7,385.3 1075.7,384.1 1078.6,369.0 1081.5,353.9 1084.3,338.8 1087.1,323.7 1089.8,308.5 1092.5,293.4 1095.2,278.3 1097.9,263.1 1100.5,248.0 1103.1,232.8 1105.7,217.7 1108.3,202.5 1110.9,187.4 1113.8,172.3" fill="#ff0000"/></svg></body></html>
